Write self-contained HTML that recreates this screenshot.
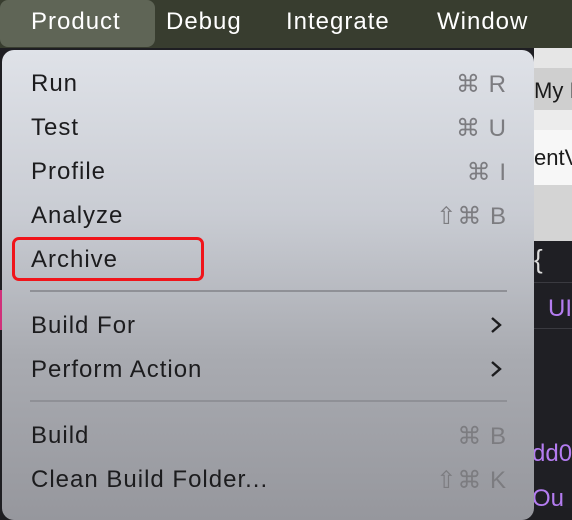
<!DOCTYPE html>
<html><head><style>
body{margin:0;width:572px;height:508px;overflow:hidden;position:relative;background:#1e1e22;font-family:"Liberation Sans",sans-serif}
.bar{position:absolute;left:0;top:0;width:572px;height:48px;background:#383d2f}
.bar span{position:absolute;top:8px;color:#fff;font-size:24px;letter-spacing:1px}
.hl{position:absolute;left:0;top:0;width:155px;height:47px;background:#5f6556;border-radius:8px}
.r{position:absolute;left:534px;width:38px;overflow:hidden;white-space:nowrap}
.menu{position:absolute;left:2px;top:50px;width:532px;height:470px;border-radius:12px;background:linear-gradient(180deg,#dfe2e8 0%,#c9ccd3 35%,#a9abb1 65%,#96979d 100%)}
.it{position:absolute;left:31px;font-size:24px;letter-spacing:1px;color:#1c1c1e;white-space:nowrap}
.sc{position:absolute;right:65px;font-size:24px;color:#7c7c80;text-align:right;letter-spacing:1px}
.sep{position:absolute;left:30px;width:477px;height:2px;background:#8f9096}
.ch{position:absolute;left:489px}
.box{position:absolute;left:12px;top:237px;width:186px;height:38px;border:3px solid #f0141a;border-radius:7px}
.code{position:absolute;left:538px;font-size:24px;color:#b47cf0;font-family:"Liberation Sans",sans-serif;white-space:nowrap}
</style></head><body>
<div class="bar"><div class="hl"></div>
<span style="left:31px">Product</span><span style="left:166px">Debug</span><span style="left:286px">Integrate</span><span style="left:437px">Window</span></div>
<div class="r" style="top:48px;height:20px;background:#e6e6e6"></div>
<div class="r" style="top:68px;height:42px;background:#cfcfcf;font-size:22px;color:#1a1a1a;line-height:46px">My I</div>
<div class="r" style="top:110px;height:20px;background:#ececec"></div>
<div class="r" style="top:130px;height:55px;background:#f7f7f7;font-size:22px;color:#1a1a1a;line-height:56px">entV</div>
<div class="r" style="top:185px;height:56px;background:#d4d4d4"></div>
<div style="position:absolute;left:534px;top:241px;width:38px;height:267px;background:#1f1f24"></div>
<div style="position:absolute;left:534px;top:282px;width:38px;height:1px;background:#3a3a40"></div>
<div style="position:absolute;left:534px;top:328px;width:38px;height:1px;background:#3a3a40"></div>
<div style="position:absolute;left:534px;top:244px;font-size:26px;color:#ddd">{</div>
<div class="code" style="top:295px;left:548px">UI</div>
<div class="code" style="top:440px;left:532px">dd0</div>
<div class="code" style="top:485px;left:532px">Ou</div>
<div style="position:absolute;left:0;top:290px;width:2px;height:40px;background:#d0307a"></div>
<div class="menu"></div>
<div class="it" style="top:70px">Run</div><div class="sc" style="top:70px">⌘ R</div>
<div class="it" style="top:114px">Test</div><div class="sc" style="top:114px">⌘ U</div>
<div class="it" style="top:158px">Profile</div><div class="sc" style="top:158px">⌘ I</div>
<div class="it" style="top:202px">Analyze</div><div class="sc" style="top:202px">⇧⌘ B</div>
<div class="it" style="top:246px">Archive</div>
<div class="box"></div>
<div class="sep" style="top:290px"></div>
<div class="it" style="top:312px">Build For</div>
<svg class="ch" style="top:315px" width="14" height="20"><path d="M3 3 L11 10 L3 17" fill="none" stroke="#1c1c1e" stroke-width="2.4"/></svg>
<div class="it" style="top:356px">Perform Action</div>
<svg class="ch" style="top:359px" width="14" height="20"><path d="M3 3 L11 10 L3 17" fill="none" stroke="#1c1c1e" stroke-width="2.4"/></svg>
<div class="sep" style="top:400px"></div>
<div class="it" style="top:422px">Build</div><div class="sc" style="top:422px">⌘ B</div>
<div class="it" style="top:466px">Clean Build Folder...</div><div class="sc" style="top:466px">⇧⌘ K</div>
</body></html>
